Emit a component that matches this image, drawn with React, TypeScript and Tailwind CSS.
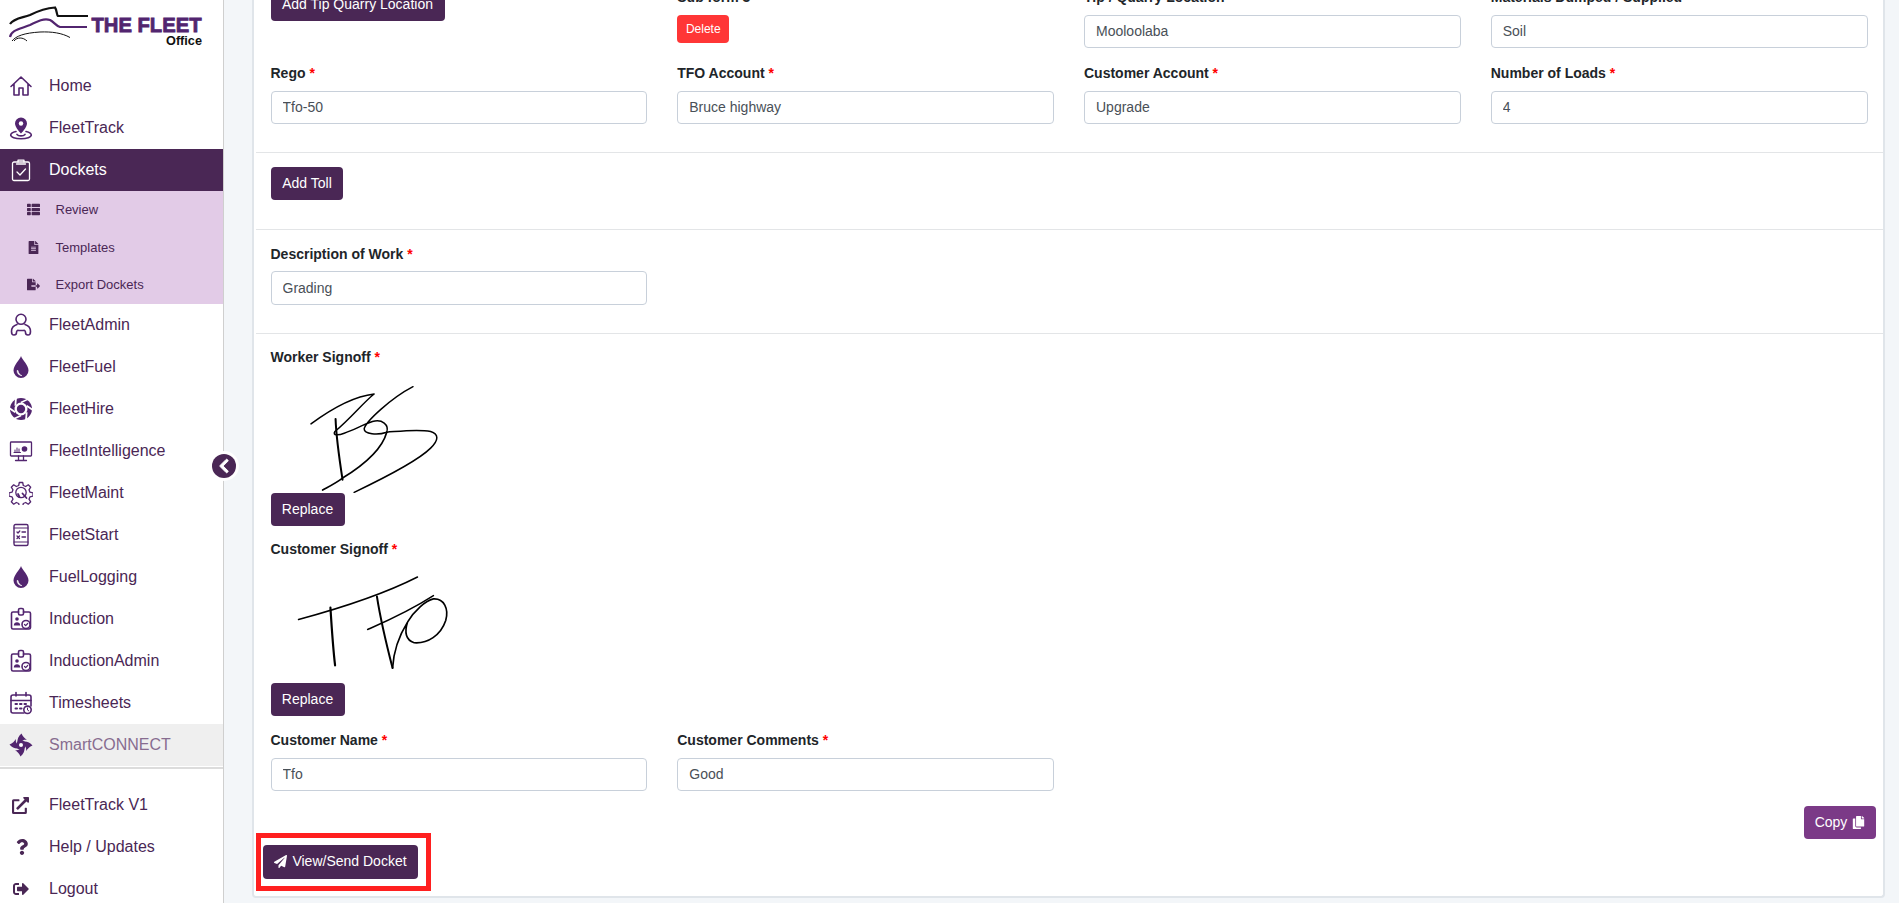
import React from "react";
import { FaThList, FaFileAlt, FaFileExport, FaExternalLinkAlt, FaQuestion, FaSignOutAlt, FaPaperPlane, FaCopy, FaChevronLeft } from "react-icons/fa";

const C = "#52256f";

const S = ({ children, color = C }: { children: React.ReactNode; color?: string }) => (
  <svg viewBox="0 0 24 24" width="24" height="24" fill="none" stroke={color} strokeWidth="1.6" strokeLinecap="round" strokeLinejoin="round">
    {children}
  </svg>
);

const HomeI = () => (
  <S><path d="M2 12.5 12 3l10 9.5M5 10v11h5v-7h4v7h5V10" /></S>
);
const TrackI = () => (
  <S>
    <path d="M12 1.5a6 6 0 0 0-6 6c0 4 6 10 6 10s6-6 6-10a6 6 0 0 0-6-6Z" fill={C} stroke="none" />
    <circle cx="12" cy="7.5" r="2.2" fill="#fff" stroke="none" />
    <path d="M7 15.5c-3 .7-5.3 2-5.3 3.6 0 2 4.6 3.6 10.3 3.6s10.3-1.6 10.3-3.6c0-1.6-2.3-2.9-5.3-3.6" />
    <path d="M8 18.4c.8 1 2.3 1.5 4 1.5s3.2-.5 4-1.5" />
  </S>
);
const ClipI = () => (
  <S color="#fff">
    <rect x="3.5" y="4" width="17" height="18.5" rx="1.5" strokeWidth="1.3" />
    <path d="M9 4V2.2h6V4M7.5 6h9M8 14l3 3 5.5-6" strokeWidth="1.3" />
  </S>
);
const AdminI = () => (
  <S>
    <circle cx="12" cy="6.3" r="5" />
    <path d="M8 11.500C4.500 12.500 2.500 15 2.500 18.500c0 2 1 3.500 2.500 3.500s2.500-1 2.500-2.500c0-1.500 1-2.500 2-2h5c1-.5 2 .5 2 2s1 2.500 2.500 2.500 2.500-1.500 2.500-3.500c0-3.500-2-6-5.500-7" />
  </S>
);
const DropI = () => (
  <svg viewBox="0 0 24 24" width="24" height="24">
    <path d="M12 1c-1 3.500-7.500 9-7.500 14.500a7.500 7.500 0 0 0 15 0C19.500 10 13 4.500 12 1Z" fill={C} />
    <path d="M8 15.500c0 3 2 5 5 5.200-2-.8-3.700-2.500-4-5.200Z" fill="#fff" stroke="#fff" strokeWidth=".5" />
  </svg>
);
const HireI = () => (
  <svg viewBox="0 0 24 24" width="24" height="24">
    <circle cx="12" cy="12" r="11" fill={C} />
    {[0, 60, 120, 180, 240, 300].map((a) => (
      <path key={a} transform={`rotate(${a} 12 12)`} d="M12 5.500C15 4 18 2.500 22 1" fill="none" stroke="#fff" strokeWidth="1.800" />
    ))}
    <circle cx="12" cy="12" r="6.500" fill="#fff" />
    <circle cx="12" cy="12" r="4.200" fill={C} />
  </svg>
);
const MonI = () => (
  <S>
    <rect x="1.500" y="3" width="21" height="14" rx=".8" strokeWidth="1.300" />
    <path d="M9.500 17v4.500M14.500 17v4.500M6.500 21.500h11" strokeWidth="1.300" />
    <path d="M6 13v-2M8 13V9M10 13v-3M5 13.500h6.500" strokeWidth="1" />
    <circle cx="15.500" cy="10" r="2.800" fill={C} stroke="none" />
  </S>
);
const GearI = () => (
  <S>
    <path strokeWidth="1.300" d="M10.300 1.500h3.400l.6 3 2.400 1 2.600-1.700 2.400 2.400-1.700 2.600 1 2.400 3 .6v3.400l-3 .6-1 2.400 1.700 2.600-2.400 2.400-2.600-1.700-2.400 1-.6 3h-3.400l-.6-3-2.400-1-2.600 1.700-2.400-2.400 1.700-2.600-1-2.400-3-.6v-3.400l3-.6 1-2.400-1.700-2.600 2.400-2.400 2.600 1.700 2.400-1Z" />
    <circle cx="12" cy="11.500" r="5.200" strokeWidth="1.300" />
    <path d="M13.500 12.500l4 4.500M9 13l1.500 3" strokeWidth="1.800" />
  </S>
);
const PhoneI = () => (
  <S>
    <rect x="5" y="1.500" width="14" height="21" rx="1.500" strokeWidth="1.400" />
    <path d="M5 5h14M5 19h14" strokeWidth="1.200" />
    <path d="M8 9l1 1 1.800-2M13 9h3.500M8 13l2.500 2.500M10.500 13 8 15.500M13 14h3.500" strokeWidth="1.300" />
  </S>
);
const IdI = () => (
  <S>
    <path d="M9.500 5H4a1.500 1.500 0 0 0-1.500 1.500v14A1.500 1.500 0 0 0 4 22h16a1.500 1.500 0 0 0 1.500-1.500v-14A1.500 1.500 0 0 0 20 5h-5.500" />
    <rect x="9.500" y="1.500" width="5" height="6.500" rx="1.500" />
    <circle cx="8" cy="12" r="1.800" fill={C} stroke="none" />
    <path d="M4.800 18.500c0-2 1.400-3.200 3.200-3.200s3.200 1.200 3.200 3.200Z" fill={C} stroke="none" />
    <circle cx="17" cy="17.500" r="4" fill="#fff" />
    <path d="M15.500 17.500l1.200 1.200 2-2.200" strokeWidth="1.200" />
  </S>
);
const CalI = () => (
  <S>
    <path d="M15 22H4a2 2 0 0 1-2-2V6a2 2 0 0 1 2-2h16a2 2 0 0 1 2 2v9" />
    <path d="M2 9.500h20M7 1.500V5M17 1.500V5" />
    <path d="M6.500 13h1.500M11 13h1.500M15.500 13H17M6.500 17.500H8M11 17.500h1.500" strokeWidth="2" />
    <circle cx="18.500" cy="18.800" r="3.700" />
    <path d="M18.500 17v2l1.200.8" strokeWidth="1" />
  </S>
);
const FanI = () => (
  <svg viewBox="0 0 24 24" width="24" height="24" fill={C}>
    {[0, 90, 180, 270].map((a) => (
      <path key={a} transform={`rotate(${a} 12 12)`} d="M8.500 10C8 6 9.500 3 12.500.5c1 3 3.500 5 5.500 6.500-2.500-.5-4 0-5.500 1.500Z" />
    ))}
    <circle cx="12" cy="12" r="4.800" />
    <circle cx="12" cy="12" r="2" fill="#fff" />
  </svg>
);

const Logo = () => (
  <svg width="224" height="65" viewBox="0 0 224 65" className="block">
    <path d="M10 24C14 18 22 18 30 15C38 11 48 8 55 7.500C57 10 56.500 15 58 16H88" fill="none" stroke="#111" strokeWidth="2.200" />
    <path d="M10 37C11 30 20 29 30 25C38 21 44 18 50 20C54 22 56 26 60 27H87" fill="none" stroke="#52256f" strokeWidth="2.200" />
    <path d="M12 41C16 36 24 33 40 32C52 31.500 62 33 70 37.500" fill="none" stroke="#111" strokeWidth="1" />
    <path d="M14 41C17 37 23 37 27 41" fill="none" stroke="#111" strokeWidth="1" />
    <text x="91.500" y="31.500" fontFamily="'Liberation Sans', sans-serif" fontWeight="700" fontSize="20" fill="#52256f" stroke="#52256f" strokeWidth=".8" textLength="110" lengthAdjust="spacingAndGlyphs">THE FLEET</text>
    <text x="166" y="45" fontFamily="'Liberation Sans', sans-serif" fontWeight="700" fontSize="12.500" fill="#111" textLength="36" lengthAdjust="spacingAndGlyphs">Office</text>
  </svg>
);

const NavRow = ({ icon, label, active, muted }: { icon: React.ReactNode; label: string; active?: boolean; muted?: boolean }) => (
  <div className={`h-[42px] flex items-center pl-[9px] shrink-0 ${active ? "bg-[#4a2755] text-white" : muted ? "bg-[#efefef] text-[#876c90]" : "text-[#4a2755]"}`}>
    <span className="w-[40px] flex items-center">{icon}</span>
    <span className="text-[16px] leading-none">{label}</span>
  </div>
);

const SubRow = ({ icon, label }: { icon: React.ReactNode; label: string }) => (
  <div className="h-[37.500px] flex items-center text-[#4a2755]">
    <span className="w-[55.500px] flex justify-center pl-[11px] text-[13px]">{icon}</span>
    <span className="text-[13px] leading-none">{label}</span>
  </div>
);

const Sidebar = () => (
  <aside className="relative w-[224px] shrink-0 h-[903px] bg-white border-r border-[#cfcfcf] z-10">
    <div className="h-full flex flex-col overflow-hidden">
      <div className="h-[65px] shrink-0"><Logo /></div>
      <NavRow icon={<HomeI />} label="Home" />
      <NavRow icon={<TrackI />} label="FleetTrack" />
      <NavRow icon={<ClipI />} label="Dockets" active />
      <div className="h-[113px] shrink-0 bg-[#e2cbe7]">
        <SubRow icon={<FaThList />} label="Review" />
        <SubRow icon={<FaFileAlt />} label="Templates" />
        <SubRow icon={<FaFileExport />} label="Export Dockets" />
      </div>
      <NavRow icon={<AdminI />} label="FleetAdmin" />
      <NavRow icon={<DropI />} label="FleetFuel" />
      <NavRow icon={<HireI />} label="FleetHire" />
      <NavRow icon={<MonI />} label="FleetIntelligence" />
      <NavRow icon={<GearI />} label="FleetMaint" />
      <NavRow icon={<PhoneI />} label="FleetStart" />
      <NavRow icon={<DropI />} label="FuelLogging" />
      <NavRow icon={<IdI />} label="Induction" />
      <NavRow icon={<IdI />} label="InductionAdmin" />
      <NavRow icon={<CalI />} label="Timesheets" />
      <NavRow icon={<FanI />} label="SmartCONNECT" muted />
      <div className="h-[17px] shrink-0 border-t-2 border-[#dcdcdc] mt-[1px]" />
      <NavRow icon={<span className="pl-[3px] text-[17px] text-[#4a2755] block"><FaExternalLinkAlt /></span>} label="FleetTrack V1" />
      <NavRow icon={<span className="pl-[5px] text-[16px] text-[#4a2755] block"><FaQuestion /></span>} label="Help / Updates" />
      <NavRow icon={<span className="pl-[4px] text-[16px] text-[#4a2755] block"><FaSignOutAlt /></span>} label="Logout" />
    </div>
    <button className="absolute left-[209px] top-[451px] w-[30px] h-[30px] rounded-full bg-white flex items-center justify-center">
      <span className="w-[24px] h-[24px] rounded-full bg-[#4a2755] text-white flex items-center justify-center text-[16px] pr-[1px]"><FaChevronLeft stroke="currentColor" strokeWidth={30} /></span>
    </button>
  </aside>
);

const Label = ({ children }: { children: React.ReactNode }) => (
  <div className="h-[22px] pt-[1px] leading-[21px] mb-[6.500px] text-[14px] font-bold text-[#212529] whitespace-nowrap">
    {children} <span className="text-[#ff0000]">*</span>
  </div>
);

const Plain = ({ children }: { children: React.ReactNode }) => (
  <div className="h-[22px] pt-[1px] leading-[21px] mb-[6.500px] text-[14px] font-bold text-[#212529] whitespace-nowrap">{children}</div>
);

const Input = ({ value }: { value: string }) => (
  <input readOnly value={value} className="block w-full h-[33.500px] rounded-[4px] border border-[#c8d0da] bg-white px-[11px] text-[14px] text-[#495057] outline-none" />
);

const Field = ({ label, value }: { label: string; value: string }) => (
  <div>
    <Label>{label}</Label>
    <Input value={value} />
  </div>
);

const Btn = ({ children, className = "" }: { children: React.ReactNode; className?: string }) => (
  <button className={`rounded-[4px] bg-[#4a2755] text-white text-[14px] flex items-center justify-center whitespace-nowrap ${className}`}>{children}</button>
);

const Rule = () => <div className="h-[1px] bg-[#e3e5e7]" />;

const SigOne = () => (
  <svg viewBox="60 130 520 325" width="173" height="108" fill="none" stroke="#000" strokeLinecap="round" strokeLinejoin="round" className="block">
    <path strokeWidth="4.500" d="M180 247C230 210 300 165 370 157C340 180 300 230 252 270C244 282 262 282 280 275C310 265 335 250 365 240C395 232 415 250 408 272C380 282 340 278 340 262C345 240 420 170 487 135" />
    <path strokeWidth="4.500" d="M408 272C440 270 500 262 540 270C565 278 565 295 540 320C500 360 400 410 310 453" />
    <path strokeWidth="5" d="M408 272C395 320 340 370 275 410C255 425 235 435 215 446" />
    <path strokeWidth="6" d="M254 232C256 290 265 350 275 415" />
  </svg>
);

const SigTwo = () => (
  <svg viewBox="60 135 540 310" width="180" height="103" fill="none" stroke="#000" strokeLinecap="round" strokeLinejoin="round" className="block">
    <path strokeWidth="4.500" d="M142 272C260 240 390 200 500 144" />
    <path strokeWidth="6.500" d="M238 236C242 300 246 360 252 410" />
    <path strokeWidth="6" d="M378 203C390 280 410 360 425 418" />
    <path strokeWidth="4.500" d="M350 302C400 280 470 250 548 200" />
    <path strokeWidth="5" d="M425 418C428 370 445 320 470 280C490 245 525 215 548 210C580 208 595 240 585 275C570 320 530 345 490 342C465 335 460 310 470 280" />
  </svg>
);

const App = () => (
  <div className="flex w-[1899px] h-[903px] overflow-hidden bg-[#f3f6f9] font-['Liberation_Sans',Arial,sans-serif]">
    <Sidebar />
    <main className="flex-1 h-[903px] overflow-hidden pl-[28px] pr-[14px]">
      <div className="-mt-[14px] h-[912px] bg-white border-x-2 border-b-2 border-[#e0e5ea] rounded-b-[4px] pl-[2px]">
        <div className="pl-[14.500px] pr-[15.500px] pb-[27.500px] grid grid-cols-4 gap-x-[30px] gap-y-[14px]">
          <div className="pt-[2px]">
            <Btn className="w-[174px] h-[33px]">Add Tip Quarry Location</Btn>
          </div>
          <div>
            <Plain>Sub form 3</Plain>
            <button className="block mt-[0.500px] w-[52px] h-[28px] rounded-[4px] bg-[#ff3636] text-white text-[12px]">Delete</button>
          </div>
          <Field label="Tip / Quarry Location" value="Mooloolaba" />
          <Field label="Materials Dumped / Supplied" value="Soil" />
          <Field label="Rego" value="Tfo-50" />
          <Field label="TFO Account" value="Bruce highway" />
          <Field label="Customer Account" value="Upgrade" />
          <Field label="Number of Loads" value="4" />
        </div>
        <Rule />
        <div className="px-[15px] pt-[14px] pb-[29px]">
          <Btn className="w-[72px] h-[33px]">Add Toll</Btn>
        </div>
        <Rule />
        <div className="pl-[14.500px] pr-[15.500px] pt-[13px] pb-[28.500px] grid grid-cols-4 gap-x-[30px]">
          <Field label="Description of Work" value="Grading" />
        </div>
        <Rule />
        <div className="pt-[12px]">
          <div className="pl-[14.500px]">
            <Label>Worker Signoff</Label>
            <div className="h-[118.500px] flex items-end"><SigOne /></div>
            <Btn className="w-[74px] h-[33px]">Replace</Btn>
            <div className="mt-[11.500px]"><Label>Customer Signoff</Label></div>
            <div className="h-[117px] pt-[8px]"><SigTwo /></div>
            <Btn className="w-[74px] h-[33px]">Replace</Btn>
          </div>
          <div className="mt-[13px] pl-[14.500px] pr-[15.500px] grid grid-cols-4 gap-x-[30px]">
            <Field label="Customer Name" value="Tfo" />
            <Field label="Customer Comments" value="Good" />
          </div>
        </div>
        <div className="flex justify-between items-start pr-[7px] pt-[14.500px]">
          <div className="mt-[27px] w-[175px] h-[58px] border-[5px] border-[#ff1f1f] pl-[2px] pt-[7px]">
            <Btn className="w-[155px] h-[34px] gap-[5px]"><FaPaperPlane className="text-[13px]" />View/Send Docket</Btn>
          </div>
          <Btn className="w-[72px] h-[33px] gap-[5px] !bg-[#7b3a87]">Copy <FaCopy className="text-[13px]" /></Btn>
        </div>
      </div>
    </main>
  </div>
);

export default App;
